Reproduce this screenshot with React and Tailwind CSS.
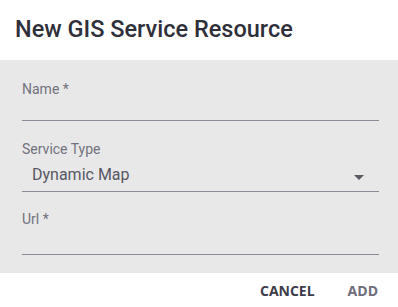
export default function App() {
  return (
    <div className="w-[398px] h-[307px] bg-white overflow-hidden" style={{ fontFamily: 'Roboto, "Liberation Sans", sans-serif' }}>
      <div className="h-[60px] px-[15px] pt-[15px]">
        <h1 className="text-[23.5px] leading-[28px] font-medium text-[#2f2f3b]">New GIS Service Resource</h1>
      </div>

      <div className="bg-[#e8e8e8] pl-[22px] pr-[19px] pt-[20px] pb-[18px]">
        <div>
          <label className="block text-[14px] leading-[18px] text-[#72727e]">Name *</label>
          <div className="h-[23px] border-b border-[#8b8b98]" />
        </div>

        <div className="mt-[19px]">
          <label className="block text-[14px] leading-[18px] text-[#72727e]">Service Type</label>
          <div className="h-[34px] border-b border-[#8b8b98] flex items-start justify-between pt-[5px] pl-[10px] pr-[15px]">
            <span className="text-[16px] leading-[24px] text-[#575764]">Dynamic Map</span>
            <svg width="10" height="5" viewBox="0 0 10 5" className="mt-[12px]">
              <path d="M0 0 L10 0 L5 5 Z" fill="#5a5a62" />
            </svg>
          </div>
        </div>

        <div className="mt-[18px]">
          <label className="block text-[14px] leading-[18px] text-[#72727e]">Url *</label>
          <div className="h-[27px] border-b border-[#8b8b98]" />
        </div>
      </div>

      <div className="h-[34px] flex items-center justify-end gap-[33px] pr-[20px]" style={{ fontFamily: '"Open Sans", "Noto Sans", sans-serif' }}>
        <button type="button" className="text-[14px] font-bold text-[#3d3d4c]">CANCEL</button>
        <button type="button" className="text-[14px] font-bold text-[#6d6d7b]">ADD</button>
      </div>
    </div>
  );
}
